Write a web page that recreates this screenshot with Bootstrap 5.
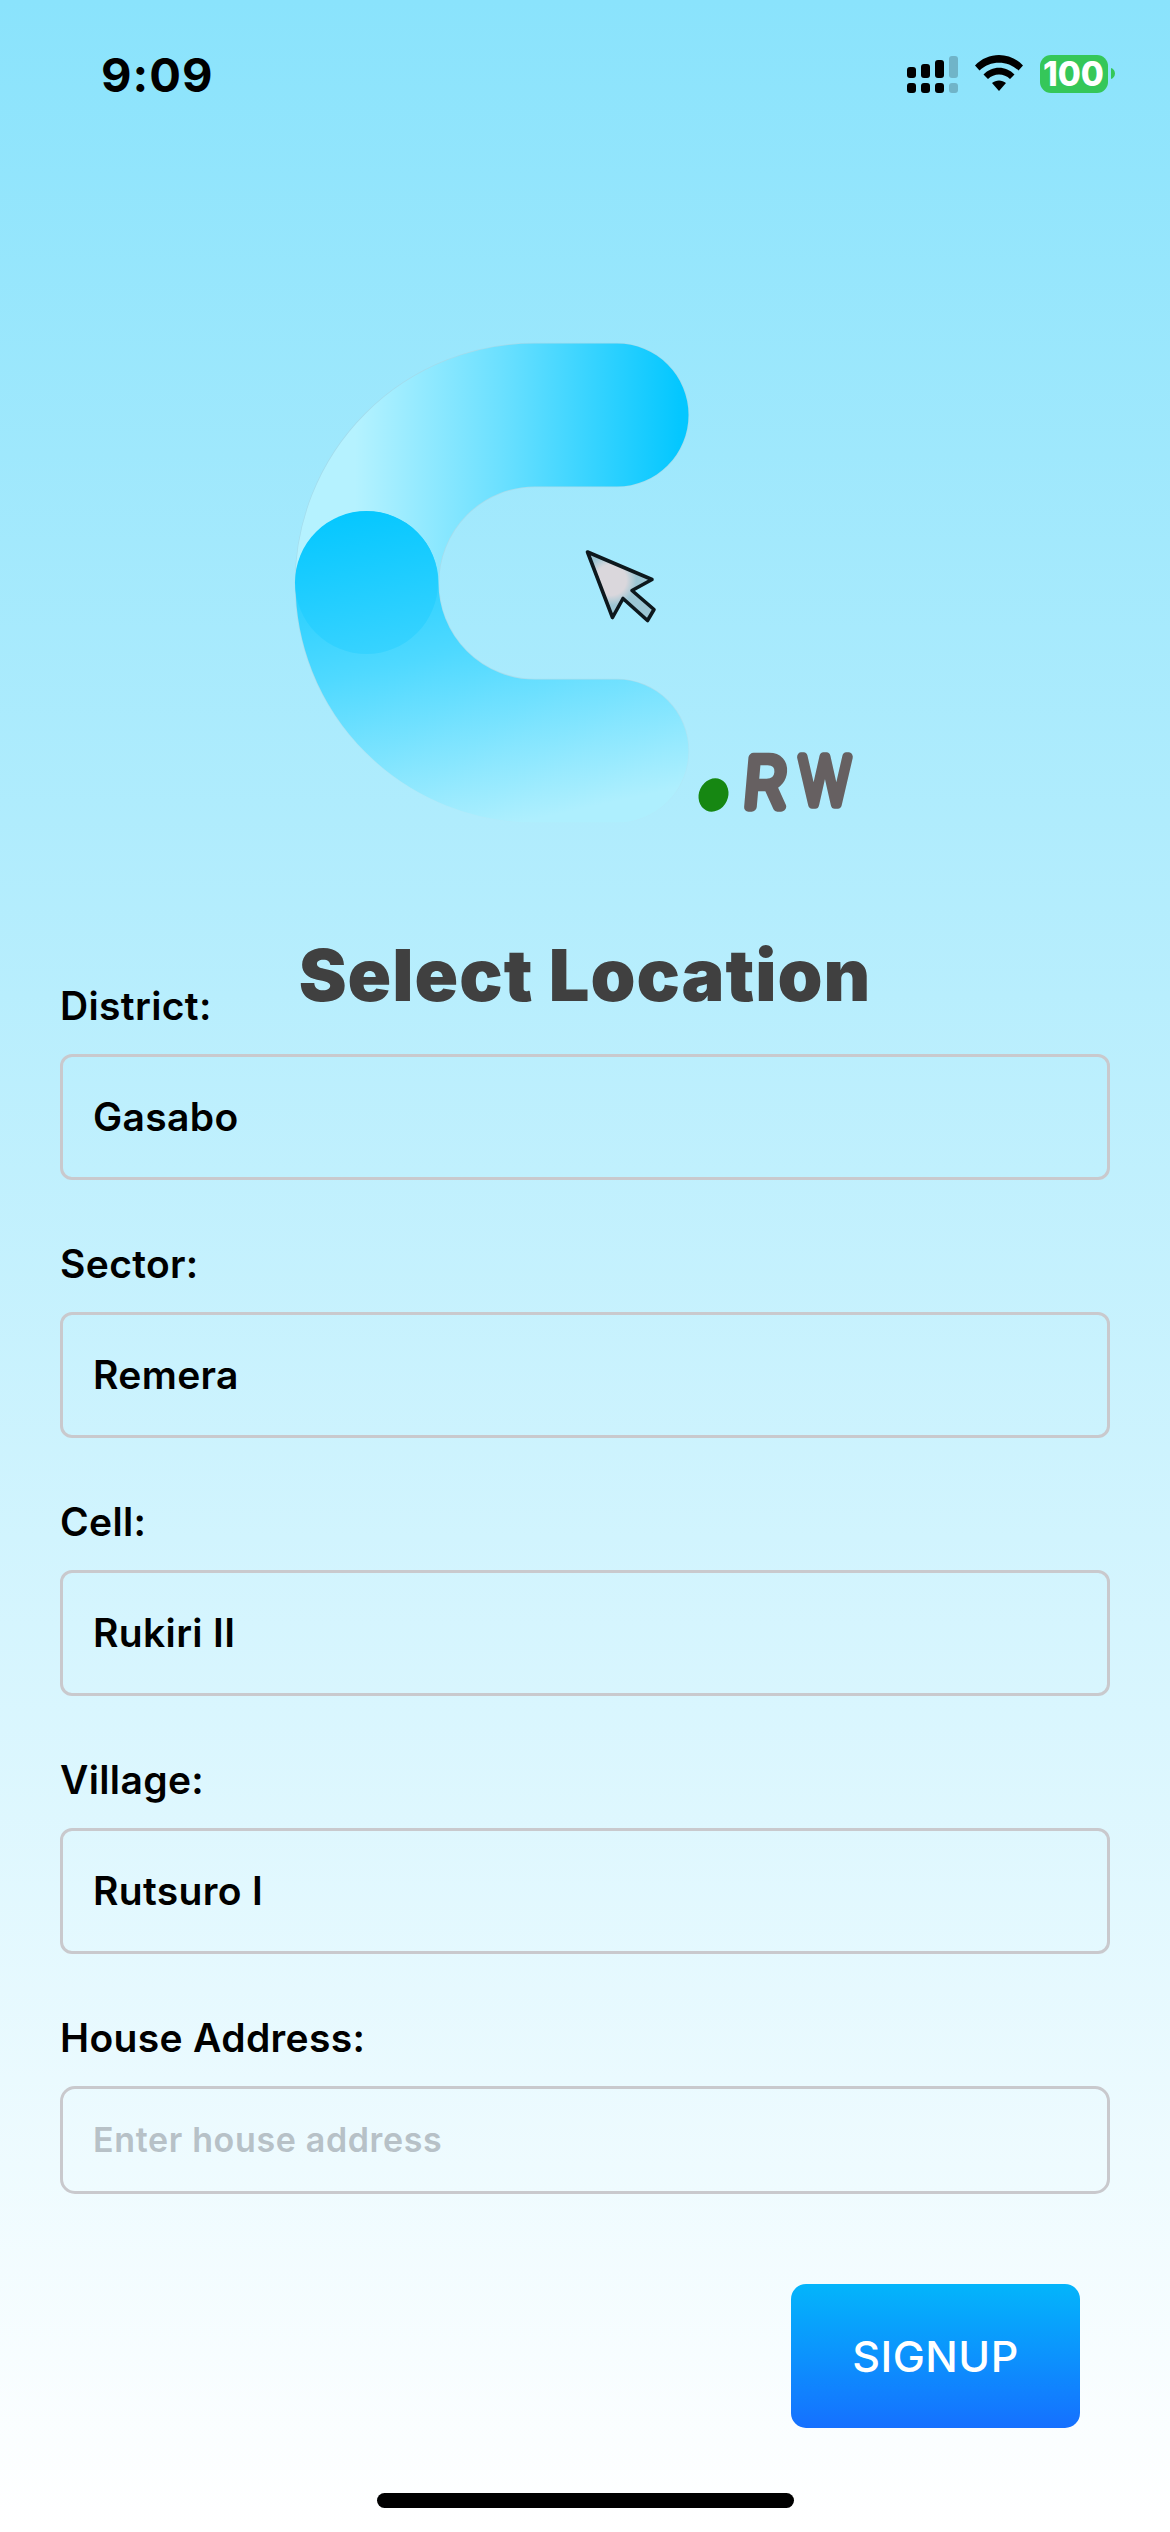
<!DOCTYPE html>
<html lang="en">
<head>
<meta charset="utf-8">
<meta name="viewport" content="width=device-width, initial-scale=1">
<title>Select Location</title>
<link href="https://cdn.jsdelivr.net/npm/bootstrap@5.3.0/dist/css/bootstrap.min.css" rel="stylesheet">
<style>
  body { font-family: Inter, "Liberation Sans", sans-serif; color: #000; }
  .screen { width: 1170px; height: 2532px; background: linear-gradient(#8ae3fc, #fff); }
  .status-bar { height: 150px; padding: 54px 55px 0 101px; }
  .clock { font-size: 47px; font-weight: 700; line-height: 42px; letter-spacing: 1px; }
  .logo { width: 590px; height: 520px; margin: 170px 0 90px 285px; }
  .screen-title { font-size: 72px; font-weight: 900; line-height: 90px; color: #404040; letter-spacing: 1px; }
  .location-form { margin-top: -38px; padding: 0 60px; }
  .field { margin-bottom: 60px; }
  .field .form-label { font-size: 39px; font-weight: 560; line-height: 48px; margin-bottom: 24px; letter-spacing: .35px; }
  .field .form-control { height: 126px; padding: 0 30px 2px; border: 3px solid #c9c9cd; border-radius: 12px; background: transparent; color: #000; font-size: 39px; font-weight: 560; letter-spacing: .35px; }
  .field .form-control.address { height: 108px; border-radius: 15px; font-size: 34px; letter-spacing: .65px; }
  .field .form-control::placeholder { color: #b7c1c7; opacity: 1; }
  .field:last-of-type { margin-bottom: 90px; }
  .btn-signup { width: 289px; height: 144px; margin-right: 30px; border: 0; border-radius: 15px; background: linear-gradient(#03b5fb, #1570ff); color: #fff; font-size: 43px; font-weight: 500; letter-spacing: .5px; }
  .home-bar { width: 417px; height: 15px; margin-top: 65px; background: #000; }
</style>
<script src="https://cdn.jsdelivr.net/npm/bootstrap@5.3.0/dist/js/bootstrap.bundle.min.js"></script>
</head>
<body>
<main class="screen d-flex flex-column overflow-hidden">
  <header class="status-bar d-flex justify-content-between align-items-start">
    <span class="clock">9:09</span>
    <svg width="208" height="42" viewBox="907 54 208 42" aria-label="Signal, Wi-Fi, battery 100">
      <g>
        <rect x="907" y="67" width="9" height="11" rx="3"/><rect x="921" y="64" width="9" height="14" rx="3"/><rect x="935" y="60" width="9" height="18" rx="3"/>
        <rect x="907" y="83" width="9" height="10" rx="3"/><rect x="921" y="83" width="9" height="10" rx="3"/><rect x="935" y="83" width="9" height="10" rx="3"/>
        <g fill="#70b4c8"><rect x="949" y="56" width="9" height="22" rx="3"/><rect x="949" y="83" width="9" height="10" rx="3"/></g>
      </g>
      <path d="M975 65.5C988 51.500 1010 51.500 1023 65.500L1018.500 70.500C1008 60 990 60 979.500 70.500ZM983.500 74.500C992 65.500 1006 65.500 1014.500 74.500L1010 79C1004 73 994 73 988 79ZM992 83C996 79.500 1002 79.500 1006 83L999 91Z"/>
      <rect x="1040" y="55" width="68" height="38" rx="11" fill="#35c759"/>
      <path d="M1111 68C1116.300 69.500 1116.300 77.500 1111 79Z" fill="#35c759"/>
      <text x="1073.500" y="86" text-anchor="middle" textLength="61" lengthAdjust="spacingAndGlyphs" font-size="34" font-weight="800" fill="#fff">100</text>
    </svg>
  </header>

  <svg class="logo flex-shrink-0" viewBox="285 320 590 520" aria-label="C.RW">
    <defs>
      <linearGradient id="upper" gradientUnits="userSpaceOnUse" x1="355" y1="0" x2="680" y2="0">
        <stop offset="0" stop-color="#b5f2ff"/><stop offset=".45" stop-color="#6be0ff"/><stop offset="1" stop-color="#04c7ff"/>
      </linearGradient>
      <linearGradient id="lower" gradientUnits="userSpaceOnUse" x1="370" y1="520" x2="440" y2="840">
        <stop offset="0" stop-color="#12caff"/><stop offset=".45" stop-color="#4fd9ff"/><stop offset="1" stop-color="#aeeffe"/>
      </linearGradient>
      <linearGradient id="rim" gradientUnits="userSpaceOnUse" x1="0" y1="344" x2="0" y2="823">
        <stop offset="0" stop-color="#a5d5e3" stop-opacity=".65"/><stop offset=".7" stop-color="#a5d5e3" stop-opacity=".6"/><stop offset="1" stop-color="#b5e8f5" stop-opacity=".2"/>
      </linearGradient>
      <linearGradient id="joint" x1=".4" y1="0" x2=".6" y2="1">
        <stop offset="0" stop-color="#05c7ff"/><stop offset="1" stop-color="#38d3ff"/>
      </linearGradient>
      <radialGradient id="steel" gradientUnits="userSpaceOnUse" cx="611" cy="580" r="34">
        <stop offset=".45" stop-color="#dad7dc"/><stop offset=".75" stop-color="#9cc6d4"/>
      </radialGradient>
    </defs>
    <g fill="none" stroke-width="143" stroke-linecap="round">
      <path d="M617 415H535A168 168 0 0 0 367 583A168 168 0 0 0 535 751H617" stroke="url(#rim)" stroke-width="144.500"/>
      <path d="M617 415H535A168 168 0 0 0 367 583" stroke="url(#upper)"/>
      <path d="M367 583A168 168 0 0 0 535 751H617" stroke="url(#lower)"/>
    </g>
    <circle cx="366.500" cy="582.500" r="71.500" fill="url(#joint)"/>
    <path d="M587.500 552L652 579.500L632 590.500L654 609.500L647.500 620.500L623 598.500L612.500 617.500Z" fill="url(#steel)" stroke="#0d181d" stroke-width="3.600" stroke-linejoin="round"/>
    <ellipse cx="713.500" cy="795" rx="14.500" ry="17" transform="rotate(25 713.500 795)" fill="#168712"/>
    <g font-weight="200" fill="#666061" stroke="#666061" stroke-linejoin="round" text-anchor="middle">
      <text transform="translate(763 806.500) skewX(-5)" font-size="68" stroke-width="9.500">R</text>
      <text transform="translate(825 803.500) scale(.84 1)" font-size="64" stroke-width="9.500">W</text>
    </g>
  </svg>

  <h1 class="screen-title text-center mb-0">Select Location</h1>

  <form class="location-form d-flex flex-column">
    <div class="field"><label class="form-label d-block" for="district">District:</label><input class="form-control" id="district" value="Gasabo"></div>
    <div class="field"><label class="form-label d-block" for="sector">Sector:</label><input class="form-control" id="sector" value="Remera"></div>
    <div class="field"><label class="form-label d-block" for="cell">Cell:</label><input class="form-control" id="cell" value="Rukiri II"></div>
    <div class="field"><label class="form-label d-block" for="village">Village:</label><input class="form-control" id="village" value="Rutsuro I"></div>
    <div class="field"><label class="form-label d-block" for="house">House Address:</label><input class="form-control address" id="house" placeholder="Enter house address"></div>
    <button type="button" class="btn btn-signup align-self-end">SIGNUP</button>
  </form>

  <div class="home-bar rounded-pill mx-auto flex-shrink-0"></div>
</main>
</body>
</html>
